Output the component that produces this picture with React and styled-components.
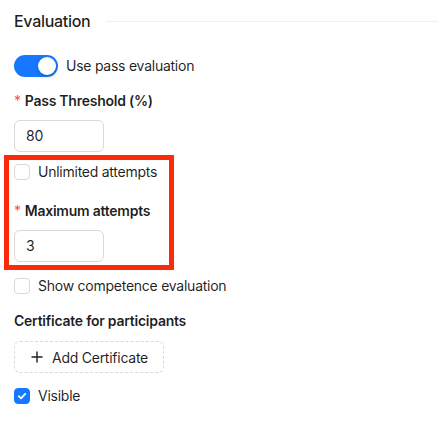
import React from 'react';
import styled, { createGlobalStyle } from 'styled-components';

const GlobalStyle = createGlobalStyle`
    body {
        margin: 0;
        background: #ffffff;
        font-family: Inter, "Liberation Sans", Arial, sans-serif;
        font-size: 14px;
        letter-spacing: -0.25px;
        color: rgba(0, 0, 0, 0.88);
    }
`

const App = () => {
    return (
        <>
            <GlobalStyle />
            <Panel>
                <Header>
                    <Title>Evaluation</Title>
                    <Divider />
                </Header>

                <SwitchRow>
                    <Switch $on><Knob $on /></Switch>
                    <span>Use pass evaluation</span>
                </SwitchRow>

                <Label $top={13}><Star>*</Star>Pass Threshold (%)</Label>
                <Input>80</Input>

                <Highlight>
                    <CheckRow $top={1}>
                        <Box />
                        <span>Unlimited attempts</span>
                    </CheckRow>
                    <Label $top={17}><Star>*</Star>Maximum attempts</Label>
                    <Input>3</Input>
                </Highlight>

                <CheckRow $top={5}>
                    <Box />
                    <span>Show competence evaluation</span>
                </CheckRow>

                <Label $top={13} $bottom={9}>Certificate for participants</Label>
                <DashedButton>
                    <svg width="14" height="14" viewBox="0 0 14 14">
                        <path d="M7 1.5v11M1.5 7h11" stroke="#1f1f1f" strokeWidth="1.4" fill="none" />
                    </svg>
                    Add Certificate
                </DashedButton>

                <CheckRow $top={12}>
                    <Box $checked>
                        <svg width="10" height="10" viewBox="0 0 10 10">
                            <path d="M1.8 5.2l2.2 2.2 4.2-4.6" stroke="#fff" strokeWidth="1.8" fill="none" strokeLinecap="round" strokeLinejoin="round" />
                        </svg>
                    </Box>
                    <span>Visible</span>
                </CheckRow>
            </Panel>
        </>
    );
}

const Panel = styled.div`
    display: flex;
    flex-direction: column;
    align-items: flex-start;
    padding: 0 0 0 14px;
`

const Header = styled.div`
    align-self: stretch;
    height: 42px;
    display: flex;
    align-items: center;
`

const Title = styled.span`
    font-size: 16px;
    font-weight: 500;
    line-height: 24px;
    letter-spacing: -0.3px;
`

const Divider = styled.div`
    flex: 1;
    height: 1px;
    margin-left: 16px;
    background: #f0f0f0;
`

const SwitchRow = styled.div`
    margin-top: 13px;
    display: flex;
    align-items: center;
    gap: 8px;
    line-height: 22px;
`

const Switch = styled.div`
    width: 44px;
    height: 22px;
    border-radius: 100px;
    background: ${props => props.$on ? '#1677ff' : 'rgba(0,0,0,0.25)'};
    position: relative;
`

const Knob = styled.div`
    position: absolute;
    top: 2px;
    left: ${props => props.$on ? '24px' : '2px'};
    width: 18px;
    height: 18px;
    border-radius: 50%;
    background: #ffffff;
    box-shadow: 0 2px 4px rgba(0, 35, 11, 0.2);
`

const Label = styled.div`
    margin-top: ${props => props.$top}px;
    padding-bottom: ${props => props.$bottom ?? 8}px;
    font-weight: 600;
    line-height: 22px;
`

const Star = styled.span`
    color: #ff4d4f;
    font-weight: 400;
    margin-right: 4px;
`

const Input = styled.div`
    box-sizing: border-box;
    width: 90px;
    height: 32px;
    padding: 0 11px;
    border: 1px solid #d9d9d9;
    border-radius: 6px;
    display: flex;
    align-items: center;
    line-height: 22px;
`

const Highlight = styled.div`
    box-sizing: border-box;
    margin: 3px 0 0 -10px;
    width: 170px;
    border: 5px solid #fa2a0a;
    padding: 0 0 3px 5px;
    display: flex;
    flex-direction: column;
    align-items: flex-start;
`

const CheckRow = styled.div`
    margin-top: ${props => props.$top}px;
    display: flex;
    align-items: center;
    gap: 8px;
    line-height: 22px;
`

const Box = styled.span`
    box-sizing: border-box;
    width: 16px;
    height: 16px;
    border-radius: 4px;
    border: 1px solid ${props => props.$checked ? '#1677ff' : '#d9d9d9'};
    background: ${props => props.$checked ? '#1677ff' : '#ffffff'};
    display: flex;
    align-items: center;
    justify-content: center;
`

const DashedButton = styled.div`
    box-sizing: border-box;
    height: 32px;
    padding: 0 15px;
    border: 1px dashed #d9d9d9;
    border-radius: 6px;
    display: flex;
    align-items: center;
    gap: 8px;
`

export default App;
